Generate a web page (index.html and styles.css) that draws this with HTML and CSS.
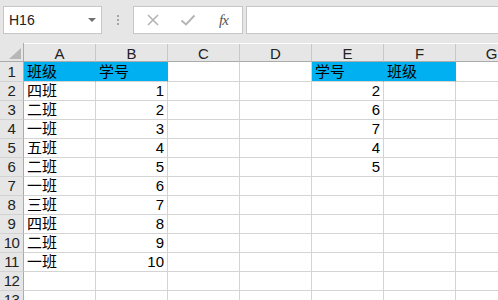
FILE: index.html
```html
<!DOCTYPE html>
<html>
<head>
<meta charset="utf-8">
<link rel="stylesheet" href="styles.css">
</head>
<body>
<div class="app">
  <div class="toolbar">
    <div class="namebox">
      <span class="ref">H16</span>
      <svg class="caret" width="8" height="4" viewBox="0 0 8 4"><path d="M0 0H8L4 4Z" fill="#707070"/></svg>
    </div>
    <div class="grip"><i></i><i></i><i></i></div>
    <div class="fbtns">
      <svg class="ico" width="14" height="14" viewBox="0 0 14 14"><path d="M2 2L12 12M12 2L2 12" stroke="#b4b4b4" stroke-width="1.6" fill="none"/></svg>
      <svg class="ico" width="16" height="14" viewBox="0 0 16 14"><path d="M1.5 7.5L6 11.5L14.5 2.5" stroke="#b4b4b4" stroke-width="1.9" fill="none"/></svg>
      <span class="fx">fx</span>
    </div>
    <div class="finput"></div>
  </div>
  <div class="sheet">
    <div class="corner"><svg width="12" height="11" viewBox="0 0 12 11"><path d="M12 0V11H0Z" fill="#b7b7b7"/></svg></div>
    <div class="ch">A</div><div class="ch">B</div><div class="ch">C</div><div class="ch">D</div><div class="ch">E</div><div class="ch">F</div><div class="ch">G</div>

    <div class="rh">1</div><div class="c fill">班级</div><div class="c fill">学号</div><div class="c"></div><div class="c"></div><div class="c fill">学号</div><div class="c fill">班级</div><div class="c"></div>
    <div class="rh">2</div><div class="c">四班</div><div class="c n">1</div><div class="c"></div><div class="c"></div><div class="c n">2</div><div class="c"></div><div class="c"></div>
    <div class="rh">3</div><div class="c">二班</div><div class="c n">2</div><div class="c"></div><div class="c"></div><div class="c n">6</div><div class="c"></div><div class="c"></div>
    <div class="rh">4</div><div class="c">一班</div><div class="c n">3</div><div class="c"></div><div class="c"></div><div class="c n">7</div><div class="c"></div><div class="c"></div>
    <div class="rh">5</div><div class="c">五班</div><div class="c n">4</div><div class="c"></div><div class="c"></div><div class="c n">4</div><div class="c"></div><div class="c"></div>
    <div class="rh">6</div><div class="c">二班</div><div class="c n">5</div><div class="c"></div><div class="c"></div><div class="c n">5</div><div class="c"></div><div class="c"></div>
    <div class="rh">7</div><div class="c">一班</div><div class="c n">6</div><div class="c"></div><div class="c"></div><div class="c"></div><div class="c"></div><div class="c"></div>
    <div class="rh">8</div><div class="c">三班</div><div class="c n">7</div><div class="c"></div><div class="c"></div><div class="c"></div><div class="c"></div><div class="c"></div>
    <div class="rh">9</div><div class="c">四班</div><div class="c n">8</div><div class="c"></div><div class="c"></div><div class="c"></div><div class="c"></div><div class="c"></div>
    <div class="rh">10</div><div class="c">二班</div><div class="c n">9</div><div class="c"></div><div class="c"></div><div class="c"></div><div class="c"></div><div class="c"></div>
    <div class="rh">11</div><div class="c">一班</div><div class="c n">10</div><div class="c"></div><div class="c"></div><div class="c"></div><div class="c"></div><div class="c"></div>
    <div class="rh">12</div><div class="c"></div><div class="c"></div><div class="c"></div><div class="c"></div><div class="c"></div><div class="c"></div><div class="c"></div>
    <div class="rh">13</div><div class="c"></div><div class="c"></div><div class="c"></div><div class="c"></div><div class="c"></div><div class="c"></div><div class="c"></div>
  </div>
</div>
</body>
</html>
```
FILE: styles.css
```css
* { box-sizing: border-box; }
html, body { margin: 0; padding: 0; }
body {
  width: 498px;
  height: 300px;
  overflow: hidden;
  background: #fff;
  font-family: "Liberation Sans", "Noto Sans CJK SC", sans-serif;
  color: #000;
}
.app { width: 498px; height: 300px; overflow: hidden; }

.toolbar {
  height: 43px;
  background: #e6e6e6;
  display: flex;
  align-items: flex-start;
  padding: 6px 0 0 3px;
}
.namebox {
  width: 99px;
  height: 28px;
  background: #fff;
  border: 1px solid #c6c6c6;
  display: flex;
  align-items: center;
  justify-content: space-between;
  padding: 0 5px 0 5px;
}
.ref { font-size: 14px; color: #222; }
.caret { margin-top: -1px; }
.grip {
  width: 31px;
  height: 28px;
  display: flex;
  flex-direction: column;
  align-items: center;
  justify-content: center;
  gap: 2px;
}
.grip i { display: block; width: 2px; height: 2px; background: #a6a6a6; }
.fbtns {
  width: 110px;
  height: 28px;
  background: #fff;
  border: 1px solid #c6c6c6;
  display: flex;
  align-items: center;
  padding: 0 0 0 12px;
  gap: 0;
}
.fbtns .ico:first-child { margin-right: 20px; }
.fbtns .ico:nth-child(2) { margin-right: 23px; }
.fx {
  font-family: "Liberation Serif", serif;
  font-style: italic;
  font-size: 15px;
  color: #555;
  letter-spacing: -1px;
}
.finput {
  margin-left: 3px;
  flex: 1;
  height: 28px;
  background: #fff;
  border: 1px solid #c6c6c6;
  border-right: none;
}

.sheet {
  display: grid;
  grid-template-columns: 24px repeat(7, 72px);
  grid-template-rows: 19px 20px;
  grid-auto-rows: 19px;
}
.corner {
  background: #e6e6e6;
  border-right: 1px solid #ababab;
  border-bottom: 1px solid #ababab;
  display: flex;
  align-items: flex-end;
  justify-content: flex-end;
  padding: 0 2px 2px 0;
}
.ch {
  background: #e6e6e6;
  border-bottom: 1px solid #ababab;
  border-right: 1px solid #c8c8c8;
  margin-top: 1px;
  font-size: 15px;
  color: #222;
  display: flex;
  align-items: center;
  justify-content: center;
  padding-top: 2px;
}
.rh {
  background: #e6e6e6;
  border-right: 1px solid #ababab;
  border-bottom: 1px solid #d2d2d2;
  font-size: 15px;
  color: #222;
  display: flex;
  align-items: flex-end;
  justify-content: center;
  line-height: 18px;
  padding-bottom: 0;
  letter-spacing: -0.5px;
}
.c {
  border-right: 1px solid #d4d4d4;
  border-bottom: 1px solid #d4d4d4;
  font-size: 15px;
  line-height: 18px;
  display: flex;
  align-items: flex-end;
  padding: 0 3px 0 3px;
  white-space: nowrap;
}
.c.n { justify-content: flex-end; }
.c.fill {
  background: #00b0f0;
  border-right-color: #00b0f0;
}
```
